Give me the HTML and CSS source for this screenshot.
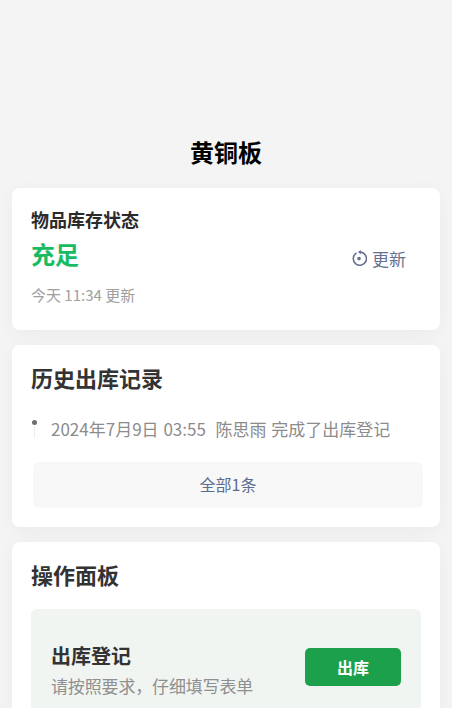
FILE: index.html
```html
<!DOCTYPE html>
<html lang="zh-CN">
<head>
<meta charset="utf-8">
<title>黄铜板</title>
<link rel="stylesheet" href="styles.css">
</head>
<body>
<main class="page">
  <h1 class="title">黄铜板</h1>
  <section class="card status">
    <div class="status-info">
      <h2 class="status-label">物品库存状态</h2>
      <div class="status-value">充足</div>
      <div class="status-time">今天 11:34 更新</div>
    </div>
    <button class="refresh">
      <svg class="refresh-icon" viewBox="0 0 16 16" width="16" height="16" aria-hidden="true">
        <path d="M5 3.3A6.6 6.6 0 1 0 9.6 2.1" fill="none" stroke="currentColor" stroke-width="1.6" stroke-linecap="round"/>
        <path d="M9.8 0V4.2L6.9 2.1Z" fill="currentColor"/>
        <circle cx="8" cy="8.6" r="1.8" fill="currentColor"/>
      </svg>
      <span>更新</span>
    </button>
  </section>
  <section class="card history">
    <h2 class="card-title">历史出库记录</h2>
    <div class="record">
      <div class="rail"><i class="dot"></i><i class="line"></i></div>
      <p class="record-text">2024年7月9日 03:55&nbsp; 陈思雨 完成了出库登记</p>
    </div>
    <button class="all">全部1条</button>
  </section>
  <section class="card ops">
    <h2 class="card-title">操作面板</h2>
    <div class="panel">
      <div class="panel-info">
        <h3 class="panel-title">出库登记</h3>
        <p class="panel-desc">请按照要求，仔细填写表单</p>
      </div>
      <button class="primary">出库</button>
    </div>
  </section>
</main>
</body>
</html>
```

FILE: styles.css
```css
* { box-sizing: border-box; }
html, body { height: 100%; }
body {
  margin: 0;
  overflow: hidden;
  background: #f4f4f4;
  font-family: "Noto Sans CJK SC", "Noto Sans", sans-serif;
  color: #333;
}
.page { padding: 134px 12px 0; display: flex; flex-direction: column; gap: 15px; }
.title { margin: 0 0 6px; height: 33px; font-size: 24px; line-height: 36px; font-weight: 700; text-align: center; color: #000; }
.card {
  background: #fff;
  border-radius: 8px;
  box-shadow: 0 4px 20px rgba(0, 0, 0, .04);
}
.status { height: 142px; padding: 18px 19px 0; display: flex; justify-content: space-between; }
.status-label { margin: 0; font-size: 18px; line-height: 27px; font-weight: 700; color: #2b2b2b; }
.status-value { margin-top: 5px; font-size: 24px; line-height: 32px; font-weight: 700; color: #19bb62; }
.status-time { margin-top: 14px; font-size: 15px; line-height: 22px; color: #a0a0a0; }
button { font-family: inherit; border: 0; padding: 0; cursor: pointer; }
.refresh { display: flex; align-items: center; gap: 5px; height: 30px; margin: 37px 15px 0 0; background: none; font-size: 17px; color: #66708f; }
.refresh-icon { display: block; margin-top: 0; }
.history { position: relative; z-index: 1; height: 182px; padding: 17px 19px 0; }
.card-title { margin: 0; font-size: 22px; line-height: 30px; font-weight: 700; color: #333; }
.record { display: flex; margin: 28px 0 0 1px; height: 32px; }
.rail { width: 19px; display: flex; flex-direction: column; align-items: flex-start; padding-top: 0; }
.dot { width: 5px; height: 5px; border-radius: 50%; background: #6f6f6f; }
.line { width: 1px; height: 12px; margin: 1px 0 0 2px; background: #ececec; }
.record-text { margin: -3px 0 0; font-size: 17px; line-height: 24px; word-spacing: 1px; color: #8c8c8c; white-space: nowrap; }
.all { display: block; width: 390px; height: 46px; margin: 10px 0 0 2px; padding-bottom: 2px; border-radius: 6px; background: #f8f8f9; font-size: 16px; color: #5d6b8f; }
.ops { height: 300px; padding: 17px 19px; }
.panel { margin-top: 20px; height: 120px; padding: 32px 20px 0; display: flex; justify-content: space-between; align-items: flex-start; background: #f0f5f2; border-radius: 6px; }
.panel-title { margin: 0; font-size: 20px; line-height: 30px; font-weight: 700; color: #333; }
.panel-desc { margin: 0; font-size: 17px; line-height: 30px; letter-spacing: -.15px; color: #8f8f8f; }
.primary { width: 96px; height: 38px; margin: 7px 0 0; border-radius: 5px; background: #1ca04c; color: #fff; font-size: 16px; font-weight: 700; }
```
